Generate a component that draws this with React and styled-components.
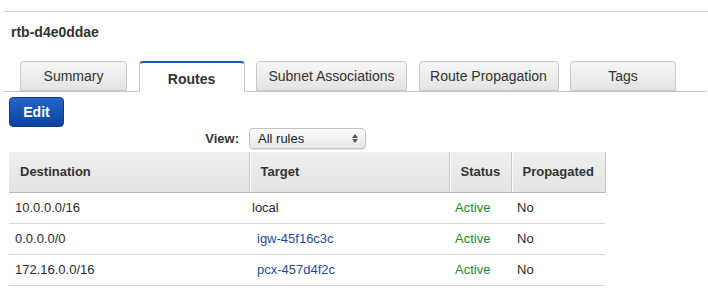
import styled, { createGlobalStyle } from "styled-components";

const GlobalStyle = createGlobalStyle`
  html, body {
    margin: 0;
    padding: 0;
    background: #fff;
  }
  body {
    font-family: "Liberation Sans", Arial, Helvetica, sans-serif;
    color: #333;
  }
`;

const Page = styled.div`
  width: 708px;
  height: 294px;
  padding-top: 11px;
  box-sizing: border-box;
  overflow: hidden;
`;

const Rule = styled.div`
  margin-left: 4px;
  border-top: 1px solid #cfcfcf;
`;

const Title = styled.h2`
  margin: 12px 0 0 11px;
  font-size: 14px;
  line-height: 16px;
  font-weight: 700;
  color: #333;
`;

const TabBar = styled.div`
  display: flex;
  gap: 11.5px;
  margin: 21px 2px 0 4px;
  padding-left: 16px;
  height: 30px;
  border-bottom: 1px solid #c8c8c8;
`;

const Tab = styled.div`
  width: ${(p) => p.$w}px;
  height: ${(p) => (p.$active ? 31 : 30)}px;
  box-sizing: border-box;
  display: flex;
  align-items: center;
  justify-content: center;
  border: 1px solid #c8c8c8;
  border-bottom: ${(p) => (p.$active ? "none" : "1px solid #c8c8c8")};
  border-top: ${(p) => (p.$active ? "2px solid #1d5cb8" : "1px solid #c8c8c8")};
  border-radius: 4px 4px 0 0;
  background: ${(p) =>
    p.$active ? "#fff" : "linear-gradient(#f6f6f6, #e4e4e4)"};
  font-size: 14px;
  font-weight: ${(p) => (p.$active ? 700 : 400)};
  color: #333;
  padding-top: ${(p) => (p.$active ? 3 : 0)}px;
  position: relative;
  z-index: 1;
`;

const Body = styled.div`
  margin: 5px 0 0 9px;
`;

const EditButton = styled.button`
  width: 55px;
  height: 30px;
  border: 1px solid #0a3a8c;
  border-radius: 4px;
  background: linear-gradient(#2566c8, #0b419f);
  color: #fff;
  font-family: inherit;
  font-size: 14px;
  font-weight: 700;
  padding: 0;
`;

const ViewRow = styled.div`
  display: flex;
  align-items: center;
  gap: 10px;
  margin-top: 1px;
  height: 21px;
`;

const ViewLabel = styled.span`
  width: 230px;
  text-align: right;
  font-size: 13px;
  font-weight: 700;
  color: #333;
`;

const Select = styled.div`
  width: 117px;
  height: 21px;
  box-sizing: border-box;
  display: flex;
  align-items: center;
  justify-content: space-between;
  padding: 0 7px 0 8px;
  border: 1px solid #c4c4c4;
  border-radius: 4px;
  background: linear-gradient(#fdfdfd, #e8e8e8);
  box-shadow: 0 1px 1px rgba(0, 0, 0, 0.12);
  font-size: 13px;
  color: #222;
`;

const Arrows = styled.span`
  display: flex;
  flex-direction: column;
  align-items: center;
  gap: 1px;
  &::before,
  &::after {
    content: "";
    border-left: 3px solid transparent;
    border-right: 3px solid transparent;
  }
  &::before {
    border-bottom: 4px solid #555;
  }
  &::after {
    border-top: 4px solid #555;
  }
`;

const Table = styled.table`
  margin-top: 3px;
  width: 596px;
  border-collapse: collapse;
  table-layout: fixed;
  font-size: 13px;
`;

const Th = styled.th`
  height: 40px;
  box-sizing: border-box;
  padding: 0 0 0 11px;
  text-align: left;
  font-weight: 700;
  color: #333;
  background: linear-gradient(#efefef, #e3e3e3);
  border-bottom: 1px solid #b9b9b9;
  border-left: ${(p) => (p.$first ? "none" : "1px solid #c9c9c9")};
  border-right: ${(p) => (p.$last ? "1px solid #c9c9c9" : "none")};
  box-shadow: ${(p) => (p.$first ? "none" : "inset 1px 0 0 #fafafa")};
`;

const Td = styled.td`
  height: 31px;
  box-sizing: border-box;
  padding: 0 0 0 ${(p) => p.$pad || 6}px;
  border-bottom: 1px solid #d6d6d6;
  color: ${(p) => p.$color || "#2a2a2a"};
`;

const Link = styled.a`
  color: #1a4d9e;
  text-decoration: none;
`;

const tabs = [
  { label: "Summary", w: 107 },
  { label: "Routes", w: 106, active: true },
  { label: "Subnet Associations", w: 151 },
  { label: "Route Propagation", w: 140 },
  { label: "Tags", w: 106 },
];

const routes = [
  { dest: "10.0.0.0/16", target: "local" },
  { dest: "0.0.0.0/0", target: "igw-45f16c3c", link: true },
  { dest: "172.16.0.0/16", target: "pcx-457d4f2c", link: true },
];

export default function App() {
  return (
    <Page>
      <GlobalStyle />
      <Rule />
      <Title>rtb-d4e0ddae</Title>
      <TabBar>
        {tabs.map((t) => (
          <Tab key={t.label} $w={t.w} $active={t.active}>
            {t.label}
          </Tab>
        ))}
      </TabBar>
      <Body>
        <EditButton>Edit</EditButton>
        <ViewRow>
          <ViewLabel>View:</ViewLabel>
          <Select>
            All rules
            <Arrows />
          </Select>
        </ViewRow>
        <Table>
          <colgroup>
            <col style={{ width: 240 }} />
            <col style={{ width: 200 }} />
            <col style={{ width: 62 }} />
            <col style={{ width: 94 }} />
          </colgroup>
          <thead>
            <tr>
              <Th $first>Destination</Th>
              <Th>Target</Th>
              <Th>Status</Th>
              <Th $last>Propagated</Th>
            </tr>
          </thead>
          <tbody>
            {routes.map((r) => (
              <tr key={r.dest}>
                <Td>{r.dest}</Td>
                <Td $pad={r.link ? 8 : 3}>
                  {r.link ? <Link href="#">{r.target}</Link> : r.target}
                </Td>
                <Td $color="#1f8a1f">Active</Td>
                <Td>No</Td>
              </tr>
            ))}
          </tbody>
        </Table>
      </Body>
    </Page>
  );
}
